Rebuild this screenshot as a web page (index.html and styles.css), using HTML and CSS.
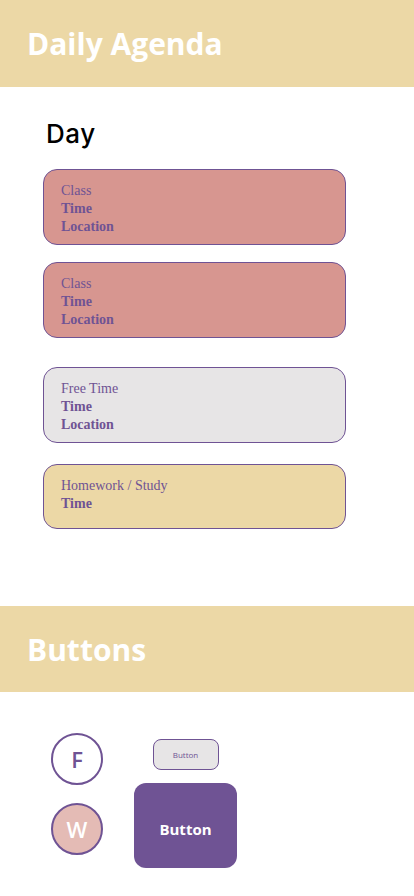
FILE: index.html
```html
<!DOCTYPE html>
<html lang="en">
    <head>
        <meta charset="UTF-8">
        <title>Daily Agenda</title>
        <link rel="stylesheet" href="styles.css">
    </head>
    <body>
        <div class="band">
            <h1>Daily Agenda</h1>
        </div>

        <div class="agenda">
            <h2 class="day">Day</h2>
            <div class="card card_class">
                <div class="kind">Class</div>
                <div class="info">Time</div>
                <div class="info">Location</div>
            </div>
            <div class="card card_class">
                <div class="kind">Class</div>
                <div class="info">Time</div>
                <div class="info">Location</div>
            </div>
            <div class="card card_free">
                <div class="kind">Free Time</div>
                <div class="info">Time</div>
                <div class="info">Location</div>
            </div>
            <div class="card card_study">
                <div class="kind">Homework / Study</div>
                <div class="info">Time</div>
            </div>
        </div>

        <div class="band band_buttons">
            <h1>Buttons</h1>
        </div>

        <div class="buttons">
            <div class="col_round">
                <div class="round">F</div>
                <div class="round round_fill">W</div>
            </div>
            <div class="col_rect">
                <div class="btn_small">Button</div>
                <div class="btn_big">Button</div>
            </div>
        </div>
    </body>
</html>
```

FILE: styles.css
```css
body{
    margin: 0;
    background-color: #ffffff;
    font-family: "Open Sans", sans-serif;
}

.band{
    background-color: #ecd8a6;
    height: 87px;
    display: flex;
    align-items: center;
    padding: 0 27px;
}

.band h1{
    margin: 0;
    color: #ffffff;
    font-size: 30px;
    font-weight: 700;
}

.band_buttons{
    height: 86px;
}

.agenda{
    padding: 29px 68px 77px 43px;
    display: flex;
    flex-direction: column;
}

.day{
    margin: 0 0 17px 3px;
    font-family: "Inter", sans-serif;
    font-weight: 500;
    font-size: 26px;
    letter-spacing: 0.6px;
    color: #000000;
    line-height: 36px;
}

.card{
    border: 1px solid #6f5394;
    border-radius: 14px;
    padding: 12px 17px 12px 17px;
    height: 76px;
    box-sizing: border-box;
    margin-bottom: 17px;
    font-family: "Liberation Serif", serif;
    font-size: 14px;
    line-height: 18px;
    color: #6f5394;
}

.card_class{
    background-color: #d79690;
}

.card_free{
    background-color: #e7e5e6;
    margin-top: 12px;
    margin-bottom: 21px;
}

.card_study{
    background-color: #ecd8a6;
    height: 65px;
    margin-bottom: 0;
}

.info{
    font-weight: 700;
}

.buttons{
    display: flex;
    padding: 41px 0 40px 51px;
    gap: 31px;
}

.col_round{
    display: flex;
    flex-direction: column;
    gap: 18px;
}

.round{
    width: 52px;
    height: 52px;
    box-sizing: border-box;
    border: 2px solid #6f5394;
    border-radius: 50%;
    display: flex;
    align-items: center;
    justify-content: center;
    font-size: 22px;
    font-weight: 600;
    color: #6f5394;
}

.round_fill{
    background-color: #e4bbb5;
    color: #ffffff;
}

.col_rect{
    display: flex;
    flex-direction: column;
    align-items: center;
    padding-top: 6px;
    gap: 13px;
    width: 103px;
}

.btn_small{
    width: 66px;
    height: 31px;
    box-sizing: border-box;
    border: 1px solid #6f5394;
    border-radius: 8px;
    background-color: #e7e5e6;
    color: #6f5394;
    font-size: 8px;
    display: flex;
    align-items: center;
    justify-content: center;
}

.btn_big{
    width: 103px;
    height: 85px;
    border-radius: 12px;
    background-color: #6f5394;
    color: #ffffff;
    font-size: 15px;
    font-weight: 700;
    display: flex;
    align-items: center;
    justify-content: center;
    padding-top: 6px;
    box-sizing: border-box;
}
```
